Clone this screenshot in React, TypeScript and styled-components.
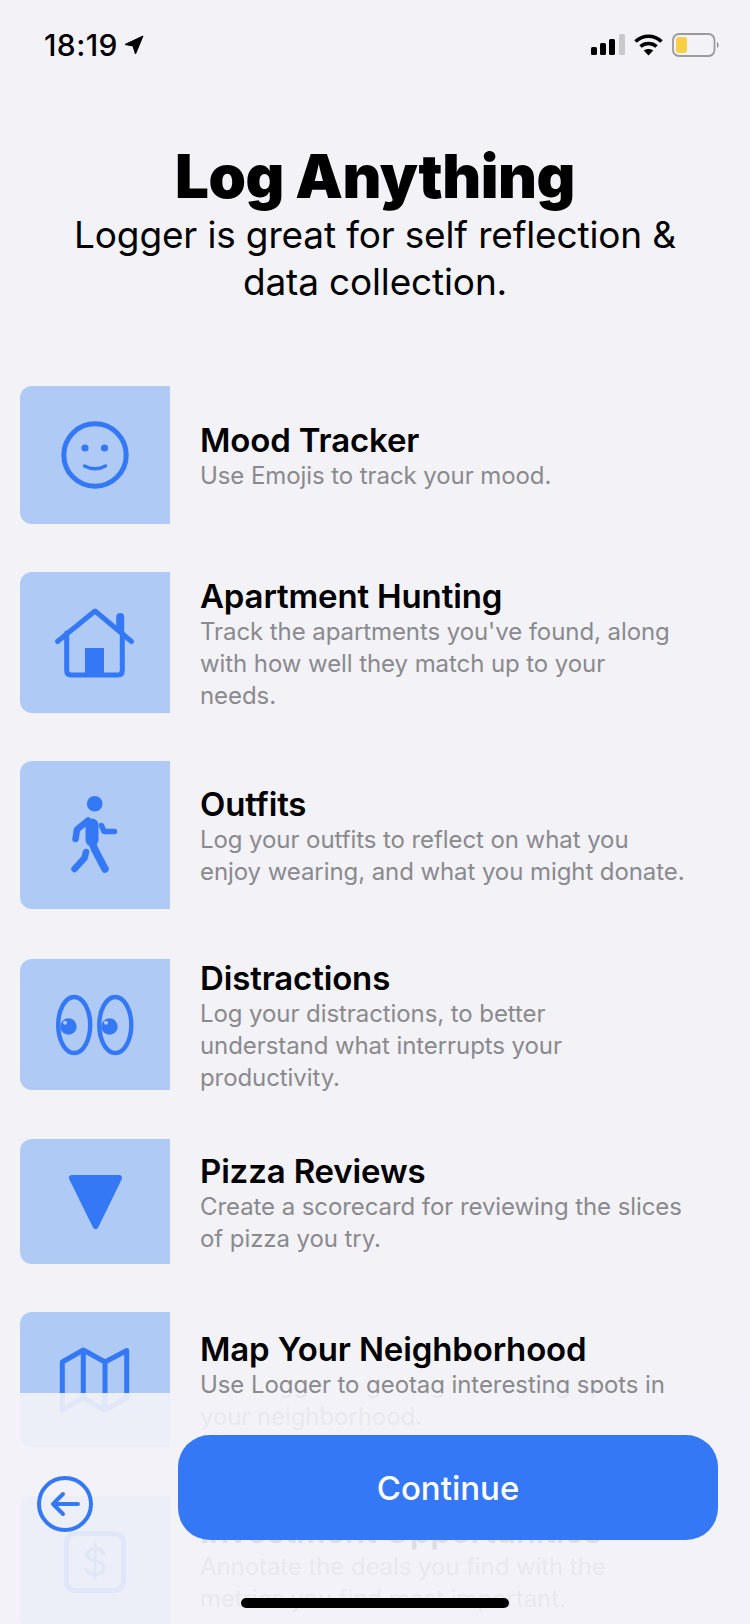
import React from "react";
import styled, { createGlobalStyle } from "styled-components";

const Global = createGlobalStyle`
  html, body { margin: 0; padding: 0; background: #f2f2f7; }
  body { width: 750px; height: 1624px; overflow: hidden; font-family: Inter, "Liberation Sans", sans-serif; }
  * { box-sizing: border-box; }
`;

const Screen = styled.div`
  position: relative;
  width: 750px;
  height: 1624px;
  overflow: hidden;
  background: #f2f2f7;
  color: #000;
`;

const StatusBar = styled.div`
  display: flex;
  justify-content: space-between;
  align-items: center;
  height: 90px;
  padding: 0 30px 0 44px;
`;

const Clock = styled.div`
  display: flex;
  align-items: center;
  gap: 6px;
  font-size: 30px;
  font-weight: 500;
  letter-spacing: 0.4px;
`;

const StatusIcons = styled.div`
  display: flex;
  align-items: center;
  gap: 9px;
`;

const Header = styled.header`
  height: 296px;
  padding-top: 50px;
  text-align: center;
`;

const Title = styled.h1`
  margin: 0;
  font-size: 60px;
  line-height: 72px;
  font-weight: 900;
  letter-spacing: -0.5px;
`;

const Subtitle = styled.p`
  margin: 0;
  font-size: 37px;
  line-height: 46.5px;
  font-weight: 400;
  letter-spacing: -0.15px;
`;

const List = styled.div`
  display: flex;
  flex-direction: column;
  padding-left: 20px;
`;

const Row = styled.div<{ $h: number; $gap: number }>`
  flex: none;
  display: flex;
  align-items: center;
  height: ${(p) => p.$h}px;
  margin-bottom: ${(p) => p.$gap}px;
`;

const Tile = styled.div`
  flex: none;
  display: flex;
  align-items: center;
  justify-content: center;
  width: 150px;
  height: 100%;
  background: #afcbf5;
  border-radius: 12px 0 0 12px;
`;

const RowText = styled.div`
  width: 530px;
  margin: 3px 0 0 30px;
`;

const RowTitle = styled.div`
  font-size: 33px;
  line-height: 39px;
  font-weight: 580;
  letter-spacing: -0.15px;
  color: #000;
`;

const RowBody = styled.div`
  font-size: 24px;
  line-height: 32px;
  letter-spacing: -0.08px;
  color: #8a8a8e;
  white-space: pre-line;
`;

const Footer = styled.div`
  position: absolute;
  left: 0;
  right: 0;
  bottom: 0;
  height: 231px;
  display: flex;
  align-items: flex-start;
  gap: 85px;
  padding: 42px 32px 0 37px;
  background: rgba(242, 242, 247, 0.91);
`;

const BackButton = styled.button`
  flex: none;
  display: flex;
  padding: 0;
  margin-top: 41px;
  width: 56px;
  height: 56px;
  border: 0;
  background: transparent;
`;

const ContinueButton = styled.button`
  flex: 1;
  height: 105px;
  border: 0;
  border-radius: 32px;
  background: #3478f6;
  color: #fff;
  font-family: inherit;
  font-size: 33px;
  font-weight: 500;
`;

const HomeBar = styled.div`
  position: absolute;
  left: 241px;
  bottom: 16px;
  width: 268px;
  height: 10px;
  border-radius: 5px;
  background: #000;
`;

const BLUE = "#3478f6";

const Glyph = ({ children }: { children: React.ReactNode }) => (
  <svg width="90" height="90" viewBox="0 0 90 90" fill="none" stroke={BLUE} strokeWidth="5" strokeLinecap="round" strokeLinejoin="round">
    {children}
  </svg>
);

const Smile = () => (
  <Glyph>
    <circle cx="45" cy="45" r="31.2" />
    <circle cx="35" cy="38" r="3.6" fill={BLUE} stroke="none" />
    <circle cx="54.5" cy="38" r="3.6" fill={BLUE} stroke="none" />
    <path d="M34.5 56 Q45 61.5 55.5 56" strokeWidth="3.4" />
  </Glyph>
);

const House = () => (
  <Glyph>
    <path d="M7.5 43.5 L45 13 L81.5 43.5" />
    <path d="M16.7 35 V72.5 Q16.7 77 21 77 H68 Q72.3 77 72.3 72.5 V35" />
    <path d="M70.2 31 V19" strokeWidth="8" strokeLinecap="round" />
    <path d="M35 50 H54 V78 H35 Z" fill={BLUE} stroke="none" />
  </Glyph>
);

const Walker = () => (
  <Glyph>
    <circle cx="44.7" cy="13.8" r="7.8" fill={BLUE} stroke="none" />
    <path d="M42 35 V50" strokeWidth="13" />
    <path d="M41 50 L44.5 59 L55 79" strokeWidth="7.5" />
    <path d="M36 62 L34.5 68 L24.5 79" strokeWidth="6.5" />
    <path d="M38 30.5 L27 39.5 L25.5 49" strokeWidth="6.5" />
    <path d="M51.5 35.5 L54 41.5 L64.5 41.5" strokeWidth="5.5" />
  </Glyph>
);

const Eyes = () => (
  <Glyph>
    <ellipse cx="24.2" cy="45" rx="16" ry="28" strokeWidth="4.4" />
    <ellipse cx="65.3" cy="45" rx="16" ry="28" strokeWidth="4.4" />
    <circle cx="18.5" cy="46.5" r="8.2" fill={BLUE} stroke="none" />
    <circle cx="59.5" cy="46.5" r="8.2" fill={BLUE} stroke="none" />
    <circle cx="15" cy="42.7" r="2" fill="#afcbf5" stroke="none" />
    <circle cx="56" cy="42.7" r="2" fill="#afcbf5" stroke="none" />
  </Glyph>
);

const Pizza = () => (
  <Glyph>
    <path d="M22 21 H69 L45.6 69 Z" fill={BLUE} strokeWidth="6" />
  </Glyph>
);

const MapIcon = () => (
  <Glyph>
    <path d="M12.3 27 L33.3 15 L55 27 L76.7 15.5 V63 L55 75 L33.3 63 L12.3 75 Z M33.3 15 V63 M55 27 V75" />
  </Glyph>
);

const DollarMark = styled.text`
  font-family: Inter, sans-serif;
  font-size: 40px;
  font-weight: 400;
`;

const Dollar = () => (
  <Glyph>
    <rect x="16.5" y="16.5" width="57" height="57" rx="9" />
    <DollarMark x="45" y="59" textAnchor="middle" fill={BLUE} stroke="none">$</DollarMark>
  </Glyph>
);

const items: { h: number; gap: number; icon: React.ReactNode; title: string; body: string }[] = [
  { h: 138, gap: 48, icon: <Smile />, title: "Mood Tracker", body: "Use Emojis to track your mood." },
  { h: 141, gap: 48, icon: <House />, title: "Apartment Hunting", body: "Track the apartments you've found, along\nwith how well they match up to your\nneeds." },
  { h: 148, gap: 50, icon: <Walker />, title: "Outfits", body: "Log your outfits to reflect on what you\nenjoy wearing, and what you might donate." },
  { h: 131, gap: 49, icon: <Eyes />, title: "Distractions", body: "Log your distractions, to better\nunderstand what interrupts your\nproductivity." },
  { h: 125, gap: 48, icon: <Pizza />, title: "Pizza Reviews", body: "Create a scorecard for reviewing the slices\nof pizza you try." },
  { h: 135, gap: 49, icon: <MapIcon />, title: "Map Your Neighborhood", body: "Use Logger to geotag interesting spots in\nyour neighborhood." },
  { h: 132, gap: 0, icon: <Dollar />, title: "Investment Opportunities", body: "Annotate the deals you find with the\nmetrics you find most important." },
];

export default function App() {
  return (
    <Screen>
      <Global />
      <StatusBar>
        <Clock>
          18:19
          <svg width="20" height="20" viewBox="0 0 20 20" fill="#000">
            <path d="M19 1 L11.5 19 L9 11 L1 9.5 Z" stroke="#000" strokeLinejoin="round" />
          </svg>
        </Clock>
        <StatusIcons>
          <svg width="34" height="22" viewBox="0 0 34 22">
            <rect x="0" y="13" width="6" height="8" rx="1.5" fill="#000" />
            <rect x="9" y="9" width="6" height="12" rx="1.5" fill="#000" />
            <rect x="18" y="5" width="6" height="16" rx="1.5" fill="#000" />
            <rect x="28" y="0" width="6" height="21" rx="1.5" fill="#c9c9cc" />
          </svg>
          <svg width="29" height="22" viewBox="0 0 29 22" fill="none" stroke="#000" strokeLinecap="butt">
            <path d="M1.5 7.5 C9 0.5 20 0.5 27.5 7.5" strokeWidth="3.6" />
            <path d="M6.5 12.5 C11 8.5 18 8.5 22.5 12.5" strokeWidth="3.6" />
            <path d="M14.5 21.5 L9.8 16.6 C12.5 14.6 16.5 14.6 19.2 16.6 Z" fill="#000" stroke="none" />
          </svg>
          <svg width="48" height="24" viewBox="0 0 48 24">
            <rect x="1" y="1" width="41.5" height="22" rx="6" fill="none" stroke="#9a9a9e" strokeWidth="1.8" />
            <rect x="4" y="4" width="11" height="16" rx="3" fill="#f8cf45" />
            <path d="M45 9 C47 10 47 14 45 15 Z" fill="#8a8a8e" />
          </svg>
        </StatusIcons>
      </StatusBar>
      <Header>
        <Title>Log Anything</Title>
        <Subtitle>
          Logger is great for self reflection &amp;
          <br />
          data collection.
        </Subtitle>
      </Header>
      <List>
        {items.map((it) => (
          <Row key={it.title} $h={it.h} $gap={it.gap}>
            <Tile>{it.icon}</Tile>
            <RowText>
              <RowTitle>{it.title}</RowTitle>
              <RowBody>{it.body}</RowBody>
            </RowText>
          </Row>
        ))}
      </List>
      <Footer>
        <BackButton aria-label="Back">
          <svg width="56" height="56" viewBox="0 0 56 56" fill="none" stroke={BLUE} strokeWidth="4" strokeLinecap="round" strokeLinejoin="round">
            <circle cx="28" cy="28" r="26" />
            <path d="M41 28 H16 M26 18 L16 28 L26 38" />
          </svg>
        </BackButton>
        <ContinueButton>Continue</ContinueButton>
      </Footer>
      <HomeBar />
    </Screen>
  );
}
